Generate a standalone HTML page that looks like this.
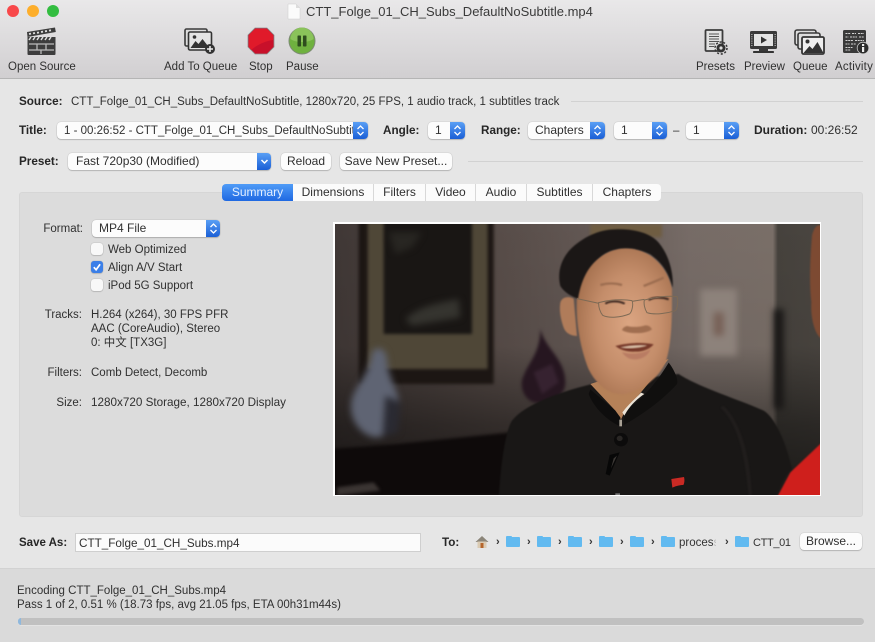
<!DOCTYPE html>
<html><head><meta charset="utf-8"><style>
html,body{margin:0;padding:0}
body{width:875px;height:642px;overflow:hidden;position:relative;background:#e6e6e6;font-family:"Liberation Sans","Noto Sans CJK SC",sans-serif;font-size:11.500px;color:#303030}
.t{position:absolute;white-space:pre;line-height:14px;margin-top:1px}
.b{font-weight:bold;color:#262626;font-size:11.700px}
.r{text-align:right}
.c{position:absolute;background:#fcfcfc;border-radius:4px;box-shadow:0 0 1px rgba(0,0,0,.3),0 1px 1px rgba(0,0,0,.18);overflow:hidden;white-space:pre;line-height:17px;height:17px;font-size:12px}
.c span{position:absolute;top:0;white-space:pre}
.s{position:absolute;right:0;top:0;bottom:0;width:15px;background:linear-gradient(#5a9ff5,#1a5fd6)}
.s svg{position:absolute;left:3px;top:2px}
.h{position:absolute;height:1px;background:#d2d2d2}
.tab{position:absolute;top:184px;height:17px;line-height:17px;text-align:center;background:#fbfbfb;border-right:1px solid #d8d8d8;font-size:12px}
.cb{position:absolute;left:91px;width:12px;height:12px;border-radius:3px;background:#f8f8f8;box-shadow:0 0 1px rgba(0,0,0,.35),0 1px 1px rgba(0,0,0,.12)}
.ic{position:absolute}
.f{position:absolute;top:537px;width:14px;height:10px;background:#62baf0;border-radius:1px}
.f:before{content:"";position:absolute;left:0;top:-1.500px;width:6px;height:2px;background:#62baf0;border-radius:1px 1px 0 0}
.ar{position:absolute;top:536px;font-size:11px;line-height:12px;font-weight:bold;color:#333}
</style></head><body>
<div style="position:absolute;left:0;top:0;width:875px;height:78px;background:linear-gradient(#e9e8e9,#d1cfd1);border-bottom:1px solid #b5b5b5"></div>
<div style="position:absolute;left:7px;top:5px;width:12px;height:12px;border-radius:50%;background:#f8484a"></div>
<div style="position:absolute;left:27px;top:5px;width:12px;height:12px;border-radius:50%;background:#fdae2b"></div>
<div style="position:absolute;left:47px;top:5px;width:12px;height:12px;border-radius:50%;background:#33bd40"></div>
<svg class="ic" style="left:287px;top:3px" width="14" height="17"><path d="M1 1h8l4 4v11H1z" fill="#fbfbfb" stroke="#ccc" stroke-width=".5"/><path d="M9 1v4h4" fill="#ddd"/></svg>
<div class="t" style="left:306px;top:5px;margin-top:0;font-size:13px;color:#3a3a3a">CTT_Folge_01_CH_Subs_DefaultNoSubtitle.mp4</div>

<!-- Open Source -->
<svg class="ic" style="left:25px;top:26px" width="32" height="30"><path d="M2 6L30 1.500l.8 4.500L2.500 11z" fill="#3d3d3d"/><path d="M3 12h28v17a1 1 0 0 1-1 1H4a1 1 0 0 1-1-1z" fill="#3d3d3d" transform="translate(-.5 -1)"/><path d="M4 8l2-.4M8 7.400l2-.4M12 6.800l2-.3M16 6l2-.3M20 5.300l2-.3M24 4.600l2-.3" stroke="#ddd" stroke-width="1.800"/><path d="M4 14l2-3M8 14l2-3M12 14l2-3M16 14l2-3M20 14l2-3M24 14l2-3" stroke="#ddd" stroke-width="1.500"/><path d="M4 18h25M4 24h25M12 18v6M21 18v6M16 24v4" stroke="#bbb" stroke-width="1.300"/></svg>
<div class="t" style="left:8px;top:59px">Open Source</div>

<!-- Add to Queue -->
<svg class="ic" style="left:184px;top:28px" width="32" height="27"><rect x="1" y="1" width="22" height="17" rx="1.500" fill="#ddd" stroke="#3a3a3a" stroke-width="1.600"/><rect x="4.500" y="4" width="23" height="18" rx="1.500" fill="#e4e4e4" stroke="#333" stroke-width="1.600"/><path d="M6.500 20l5-7 3 3 4-5 7 9z" fill="#333"/><circle cx="10.500" cy="9" r="1.800" fill="#333"/><circle cx="26" cy="21" r="5" fill="#333"/><path d="M23 21h6M26 18v6" stroke="#eee" stroke-width="1.500"/></svg>
<div class="t" style="left:164px;top:59px">Add To Queue</div>

<!-- Stop -->
<svg class="ic" style="left:247px;top:27px" width="28" height="28"><path d="M8 1h12l7 7v12l-7 7H8l-7-7V8z" fill="#c8102a" stroke="#8e8e8e" stroke-width=".8"/><path d="M8 2h12l6 6v5C18 14 10 18 4 23l-2-3V8z" fill="#e01a2a"/></svg>
<div class="t" style="left:249px;top:59px">Stop</div>

<!-- Pause -->
<svg class="ic" style="left:288px;top:27px" width="28" height="28"><circle cx="14" cy="14" r="13" fill="#6fb13f" stroke="#7d8a75"/><path d="M2.500 12A11.500 11.500 0 0 1 25.500 12C20 16 8 16 2.500 12z" fill="#8ac35a"/><rect x="9.500" y="8.500" width="3.500" height="11" rx=".7" fill="#2e4d1e"/><rect x="15" y="8.500" width="3.500" height="11" rx=".7" fill="#2e4d1e"/></svg>
<div class="t" style="left:286px;top:59px">Pause</div>

<!-- Presets -->
<svg class="ic" style="left:704px;top:29px" width="24" height="26"><rect x="1.500" y="1" width="17" height="21" rx="1" fill="#e2e2e2" stroke="#3c3c3c" stroke-width="1.800"/><path d="M5 5h10M5 7.500h10M5 10h10M5 12.500h10M5 15h6M5 17.500h5" stroke="#555" stroke-width="1"/><circle cx="17" cy="19" r="4.500" fill="#333"/><circle cx="17" cy="19" r="6" fill="none" stroke="#333" stroke-width="1.500" stroke-dasharray="2 1.800"/><circle cx="17" cy="19" r="1.600" fill="#ddd"/></svg>
<div class="t" style="left:696px;top:59px">Presets</div>

<!-- Preview -->
<svg class="ic" style="left:749px;top:29px" width="30" height="26"><rect x="1" y="2" width="27" height="18" rx="1.500" fill="#3a3a3a"/><rect x="5" y="5" width="19" height="12" fill="#e4e4e4"/><path d="M12 7.500l6 3.500-6 3.500z" fill="#333"/><path d="M2.800 5v12M26.200 5v12" stroke="#aaa" stroke-width="1.400" stroke-dasharray="1 1.200"/><path d="M10 20h9v2h-9z" fill="#3a3a3a"/><rect x="4" y="22" width="21" height="2" rx=".8" fill="#333"/></svg>
<div class="t" style="left:744px;top:59px">Preview</div>

<!-- Queue -->
<svg class="ic" style="left:794px;top:28px" width="32" height="28"><rect x="1" y="2" width="21" height="15" rx="2" fill="#ddd" stroke="#3a3a3a" stroke-width="1.600"/><rect x="4" y="5" width="22" height="16" rx="2" fill="#ddd" stroke="#3a3a3a" stroke-width="1.600"/><rect x="8" y="9" width="22" height="17" rx="1.500" fill="#eee" stroke="#333" stroke-width="1.800"/><path d="M9.500 25l6-7 3 3 5-7 6 11z" fill="#333"/><circle cx="13.500" cy="13.500" r="2" fill="#333"/></svg>
<div class="t" style="left:793px;top:59px">Queue</div>

<!-- Activity -->
<svg class="ic" style="left:842px;top:29px" width="28" height="26"><rect x="1" y="1" width="23" height="23" rx="1.500" fill="#3a3a3a"/><path d="M3.500 4.500h5M10 4.500h4M16 4.500h6M3.500 8h3M8 8h7M17 8h5M3.500 11.500h8M13 11.500h9M3.500 15h4M9 15h5M3.500 18.500h7M3.500 21h5" stroke="#d4d4d4" stroke-width="1.100" stroke-dasharray="2 .7"/><circle cx="21" cy="19" r="5.800" fill="#2c2c2c" stroke="#ccc" stroke-width=".8"/><rect x="20" y="18" width="2.200" height="5" fill="#eee"/><rect x="20" y="15" width="2.200" height="2" fill="#eee"/></svg>
<div class="t" style="left:835px;top:59px;letter-spacing:.2px">Activity</div>

<!-- Source -->
<div class="t b" style="left:19px;top:94px">Source:</div>
<div class="t" style="left:71px;top:94px">CTT_Folge_01_CH_Subs_DefaultNoSubtitle, 1280x720, 25 FPS, 1 audio track, 1 subtitles track</div>
<div class="h" style="left:571px;top:101px;width:292px"></div>

<!-- Title row -->
<div class="t b" style="left:19px;top:123px">Title:</div>
<div class="c" style="left:57px;top:122px;width:311px;font-size:11.500px;line-height:18px"><span style="left:7px;width:289px;overflow:hidden">1 - 00:26:52 - CTT_Folge_01_CH_Subs_DefaultNoSubtitle</span><div class="s"><svg width="9" height="13"><path d="M1.500 5L4.500 2l3 3M1.500 8l3 3 3-3" fill="none" stroke="#fff" stroke-width="1.300"/></svg></div></div>
<div class="t b" style="left:383px;top:123px">Angle:</div>
<div class="c" style="left:428px;top:122px;width:37px"><span style="left:7px">1</span><div class="s"><svg width="9" height="13"><path d="M1.500 5L4.500 2l3 3M1.500 8l3 3 3-3" fill="none" stroke="#fff" stroke-width="1.300"/></svg></div></div>
<div class="t b" style="left:481px;top:123px">Range:</div>
<div class="c" style="left:528px;top:122px;width:77px"><span style="left:7px">Chapters</span><div class="s"><svg width="9" height="13"><path d="M1.500 5L4.500 2l3 3M1.500 8l3 3 3-3" fill="none" stroke="#fff" stroke-width="1.300"/></svg></div></div>
<div class="c" style="left:614px;top:122px;width:53px"><span style="left:7px">1</span><div class="s"><svg width="9" height="13"><path d="M1.500 5L4.500 2l3 3M1.500 8l3 3 3-3" fill="none" stroke="#fff" stroke-width="1.300"/></svg></div></div>
<div class="t" style="left:673px;top:123px">–</div>
<div class="c" style="left:686px;top:122px;width:53px"><span style="left:7px">1</span><div class="s"><svg width="9" height="13"><path d="M1.500 5L4.500 2l3 3M1.500 8l3 3 3-3" fill="none" stroke="#fff" stroke-width="1.300"/></svg></div></div>
<div class="t b" style="left:754px;top:123px;margin-top:0;font-size:12px">Duration:</div>
<div class="t" style="left:811px;top:123px;margin-top:0;font-size:12px">00:26:52</div>

<!-- Preset row -->
<div class="t b" style="left:19px;top:154px">Preset:</div>
<div class="c" style="left:68px;top:153px;width:203px"><span style="left:8px">Fast 720p30 (Modified)</span><div class="s" style="width:14px"><svg width="9" height="13"><path d="M1.500 5L4.500 8l3-3" fill="none" stroke="#fff" stroke-width="1.500"/></svg></div></div>
<div class="c" style="left:281px;top:153px;width:50px;text-align:center">Reload</div>
<div class="c" style="left:340px;top:153px;width:112px;text-align:center">Save New Preset...</div>
<div class="h" style="left:468px;top:161px;width:395px"></div>

<!-- Panel -->
<div style="position:absolute;left:19px;top:192px;width:842px;height:323px;background:#dcdcdc;border:1px solid #d6d6d6;border-radius:3px"></div>
<div class="tab" style="left:222px;width:71px;background:linear-gradient(#4f9bf7,#1f68e2);color:#e4efff;border-radius:4px 0 0 4px;border:0">Summary</div>
<div class="tab" style="left:293px;width:80px">Dimensions</div>
<div class="tab" style="left:374px;width:51px">Filters</div>
<div class="tab" style="left:426px;width:49px">Video</div>
<div class="tab" style="left:476px;width:50px">Audio</div>
<div class="tab" style="left:527px;width:65px">Subtitles</div>
<div class="tab" style="left:593px;width:68px;border-right:0;border-radius:0 4px 4px 0">Chapters</div>

<!-- Summary left -->
<div class="t r" style="left:22px;width:61px;top:221px">Format:</div>
<div class="c" style="left:92px;top:220px;width:128px"><span style="left:7px">MP4 File</span><div class="s" style="width:14px"><svg width="9" height="13"><path d="M1.500 5L4.500 2l3 3M1.500 8l3 3 3-3" fill="none" stroke="#fff" stroke-width="1.300"/></svg></div></div>
<div class="cb" style="top:243px"></div><div class="t" style="left:108px;top:242px">Web Optimized</div>
<div class="cb" style="top:261px;background:#3b7fe8"><svg width="12" height="12" style="position:absolute;left:0;top:0"><path d="M2.800 6.200l2.300 2.600 4-5.600" fill="none" stroke="#fff" stroke-width="1.700"/></svg></div><div class="t" style="left:108px;top:260px">Align A/V Start</div>
<div class="cb" style="top:279px"></div><div class="t" style="left:108px;top:278px">iPod 5G Support</div>
<div class="t r" style="left:22px;width:60px;top:307px">Tracks:</div>
<div class="t" style="left:91px;top:307px">H.264 (x264), 30 FPS PFR</div>
<div class="t" style="left:91px;top:321px">AAC (CoreAudio), Stereo</div>
<div class="t" style="left:91px;top:335px">0: 中文 [TX3G]</div>
<div class="t r" style="left:22px;width:60px;top:365px">Filters:</div>
<div class="t" style="left:91px;top:365px">Comb Detect, Decomb</div>
<div class="t r" style="left:22px;width:60px;top:395px">Size:</div>
<div class="t" style="left:91px;top:395px;font-size:11.700px">1280x720 Storage, 1280x720 Display</div>

<!-- Photo -->
<div style="position:absolute;left:333px;top:222px;width:488px;height:274px;background:#fff"></div>
<div style="position:absolute;left:334.500px;top:223.500px;width:485.500px;height:271.500px;overflow:hidden">
<svg width="486" height="272" viewBox="14 25 1458 816" preserveAspectRatio="none" style="display:block;color-interpolation-filters:sRGB">
<defs>
<filter id="b1" x="-20%" y="-20%" width="140%" height="140%" color-interpolation-filters="sRGB"><feGaussianBlur stdDeviation="10"/></filter>
<filter id="b2" x="-20%" y="-20%" width="140%" height="140%" color-interpolation-filters="sRGB"><feGaussianBlur stdDeviation="5"/></filter>
<filter id="b3" x="-20%" y="-20%" width="140%" height="140%" color-interpolation-filters="sRGB"><feGaussianBlur stdDeviation="2.500"/></filter>
<filter id="b5" x="-30%" y="-30%" width="160%" height="160%" color-interpolation-filters="sRGB"><feGaussianBlur stdDeviation="14"/></filter>
<linearGradient id="w" x1="0" x2="1"><stop offset="0" stop-color="#3f3735"/><stop offset=".33" stop-color="#574c48"/><stop offset=".55" stop-color="#655a56"/><stop offset=".72" stop-color="#776c67"/><stop offset=".885" stop-color="#7a6f68"/><stop offset=".895" stop-color="#46423d"/><stop offset="1" stop-color="#4b4641"/></linearGradient>
<linearGradient id="v" x1="0" y1="0" x2="0" y2="1"><stop offset="0" stop-color="#000" stop-opacity="0"/><stop offset=".45" stop-color="#000" stop-opacity=".05"/><stop offset=".72" stop-color="#000" stop-opacity=".42"/><stop offset=".95" stop-color="#000" stop-opacity=".6"/></linearGradient>
<radialGradient id="sk" cx=".55" cy=".52" r=".62"><stop offset="0" stop-color="#dba582"/><stop offset=".55" stop-color="#c48d6a"/><stop offset="1" stop-color="#a06c4a"/></radialGradient>
</defs>
<rect x="0" y="0" width="1500" height="870" fill="url(#w)"/>
<rect x="0" y="0" width="1500" height="870" fill="url(#v)"/>
<rect x="780" y="25" width="215" height="40" fill="#6f5d42" filter="url(#b2)"/>
<g filter="url(#b2)">
<rect x="85" y="15" width="405" height="490" fill="#1c1613"/>
<rect x="112" y="15" width="360" height="445" fill="#4f4737"/>
<rect x="160" y="15" width="265" height="340" fill="#191614"/>
</g>
<path d="M225 310c40-35 80-45 160-60l5 55-145 25z" fill="#35342f" filter="url(#b1)"/>
<path d="M175 50h100l-30 45-50 20z" fill="#282622" filter="url(#b1)"/>
<g filter="url(#b1)">
<rect x="1110" y="220" width="110" height="200" fill="#8d827b"/>
<rect x="1150" y="290" width="30" height="70" fill="#776056"/>
<rect x="1330" y="280" width="30" height="300" fill="#191716"/>
</g>
<g filter="url(#b1)">
<path d="M125 410c15-20 40-15 45 20 0 40 20 70 35 120 10 70-25 115-70 115-40-5-80-50-72-105 5-45 55-80 62-150z" fill="#5f6473"/>
<path d="M165 540l45 20-8 90-45 12z" fill="#2a2a32"/>
</g>
<g filter="url(#b2)">
<path d="M630 340c15 60 75 90 75 160 0 50-60 70-95 60-30-10-45-50-30-80 15-40 50-70 50-140z" fill="#261620"/>
<path d="M610 470l55-25 20 55-50 35z" fill="#3b2535" opacity=".8"/>
</g>
<path d="M0 700l200-15 340-35v190H0z" fill="#0e0a0a" filter="url(#b2)"/>
<path d="M20 815l110-15 20 25-130 15z" fill="#3a3432" filter="url(#b2)"/>
<path d="M1340 845L1380 770 1475 680V845z" fill="#cf1f1c" filter="url(#b3)"/>
<path d="M1445 60c10-40 25-30 30-30v340c-20-10-35-60-32-110-8-70-2-150 2-200z" fill="#7d4a32" filter="url(#b3)"/>
<!-- body -->
<path d="M505 850c5-90 18-200 40-235 40-50 140-85 240-110l260-30c60 40 190 80 255 110 40 25 70 110 85 175-30 30-40 60-50 90z" fill="#191716" filter="url(#b3)"/>
<path d="M1180 570c60 60 80 170 85 271h-10c-10-100-25-210-85-265z" fill="#201d1c" filter="url(#b3)"/>
<!-- neck -->
<path d="M780 505L1015 430 882 590 872 612 855 585z" fill="#b58158"/>
<!-- head -->
<g transform="translate(630 21)">
<path d="M100 228c-15-8-35-6-40 12-5 30 5 60 10 75 5 15 20 25 40 25z" fill="#b07c5a" filter="url(#b3)"/>
<path d="M110 225C115 150 170 85 250 75 320 72 385 130 395 200 395 280 395 350 380 405 370 450 320 500 250 515 200 515 165 480 145 440 125 390 105 310 110 225z" fill="url(#sk)" filter="url(#b3)"/>
<path d="M60 190C50 150 62 110 90 80 125 45 175 20 225 20 280 18 330 30 355 60 385 95 400 150 397 195 385 150 365 120 330 95 290 75 240 68 195 92 150 120 125 160 113 228 95 222 72 210 60 190z" fill="#1b1716" filter="url(#b3)"/>
<path d="M180 187c20-6 45-6 65 0M310 190c20-8 45-18 60-25" stroke="#9c6d50" stroke-width="7" fill="none" filter="url(#b3)"/>
<path d="M195 243c15-9 40-9 58 0M325 232c15-9 40-9 60-2" stroke="#3a2620" stroke-width="6" fill="none" filter="url(#b3)"/>
<path d="M110 228l66 14M175 240c30-8 70-12 100-6 5 10 0 35-8 40-25 10-60 14-80 4-8-10-13-26-12-38zM312 232c30-8 70-14 98-10 4 10 2 35-5 42-25 8-60 14-85 6-8-12-10-28-8-38zM275 236l37-6" fill="none" stroke="#7d6a55" stroke-width="3"/>
<path d="M245 322c15 12 70 14 90-2-5-10-12-12-20-12-20 6-40 6-55 2-8 2-13 6-15 12z" fill="#a06e50" filter="url(#b3)"/>
<path d="M225 370c35-10 85-12 115-5-12 14-30 22-55 22-25 1-45-5-60-17z" fill="#76392a" filter="url(#b3)"/>
<path d="M240 374c25-6 55-8 80-6-10 7-60 12-80 6z" fill="#d9c0a8" filter="url(#b3)"/>
<path d="M245 388c20 8 60 6 85-8-5 20-30 32-50 30-15 0-28-10-35-22z" fill="#b97c63" filter="url(#b3)"/>
</g>
<!-- collar -->
<path d="M1015 441C1030 460 1045 490 1040 505 990 560 930 600 880 628L880 585C930 560 980 500 1015 441z" fill="#100f0e"/>
<path d="M780 521L855 585 870 605 870 632C830 615 790 575 775 535z" fill="#0e0d0d"/>
<path d="M876 590C895 565 920 545 932 531L942 535C920 550 898 570 882 600z" fill="#ebe3d6"/>
<rect x="867" y="612" width="8" height="20" fill="#a9a195"/>
<!-- details -->
<ellipse cx="872" cy="672" rx="21" ry="20" fill="#0c0b0b"/><ellipse cx="868" cy="668" rx="9" ry="8" fill="#2a2725"/>
<path d="M838 718l30-8-30 70-12-5z" fill="#070707"/><path d="M850 728l10-8-18 38z" fill="#3c3835"/>
<path d="M1023 790l38-6c2 8 2 18-2 24-10 0-20 2-33 8z" fill="#c92a24"/>
<path d="M855 841v-8h14v8z" fill="#777"/>
</svg></div>

<!-- Save As -->
<div class="t b" style="left:19px;top:535px;font-size:11.500px">Save As:</div>
<div style="position:absolute;left:75px;top:533px;width:344px;height:17px;background:#fbfbfb;border:1px solid #cfcfcf"><div class="t" style="left:3px;top:2px;font-size:11.700px">CTT_Folge_01_CH_Subs.mp4</div></div>
<div class="t b" style="left:442px;top:535px">To:</div>
<svg class="ic" style="left:475px;top:535px" width="14" height="14"><path d="M0.500 7L7 1l6.500 6z" fill="#8b8579"/><path d="M2.500 6.500h9V13h-9z" fill="#dbcbb3"/><rect x="5.500" y="8" width="3" height="5" fill="#b5652b"/></svg>
<div class="ar" style="left:496px">›</div>
<div class="f" style="left:506px"></div><div class="ar" style="left:527px">›</div>
<div class="f" style="left:537px"></div><div class="ar" style="left:558px">›</div>
<div class="f" style="left:568px"></div><div class="ar" style="left:589px">›</div>
<div class="f" style="left:599px"></div><div class="ar" style="left:620px">›</div>
<div class="f" style="left:630px"></div><div class="ar" style="left:651px">›</div>
<div class="f" style="left:661px"></div>
<div class="t" style="left:679px;top:535px;width:37px;overflow:hidden;color:#333;font-size:11.500px">proces<span style="color:#bbb">s</span></div>
<div class="ar" style="left:725px">›</div>
<div class="f" style="left:735px"></div>
<div class="t" style="left:753px;top:535px;color:#333;font-size:11px;letter-spacing:-.35px">CTT_01</div>
<div class="c" style="left:800px;top:533px;width:62px;text-align:center">Browse...</div>

<!-- Status -->
<div style="position:absolute;left:0;top:568px;width:875px;height:74px;background:#dadada;border-top:1px solid #d2d2d2;box-sizing:border-box"></div>
<div class="t" style="left:17px;top:583px">Encoding CTT_Folge_01_CH_Subs.mp4</div>
<div class="t" style="left:17px;top:597px">Pass 1 of 2, 0.51 % (18.73 fps, avg 21.05 fps, ETA 00h31m44s)</div>
<div style="position:absolute;left:18px;top:618px;width:846px;height:7px;border-radius:3.500px;background:#c0c0c0;box-shadow:0 1px 0 #e3e3e3"></div>
<div style="position:absolute;left:18px;top:618px;width:3px;height:7px;border-radius:3px 0 0 3px;background:#8fb8dd"></div>
</body></html>
